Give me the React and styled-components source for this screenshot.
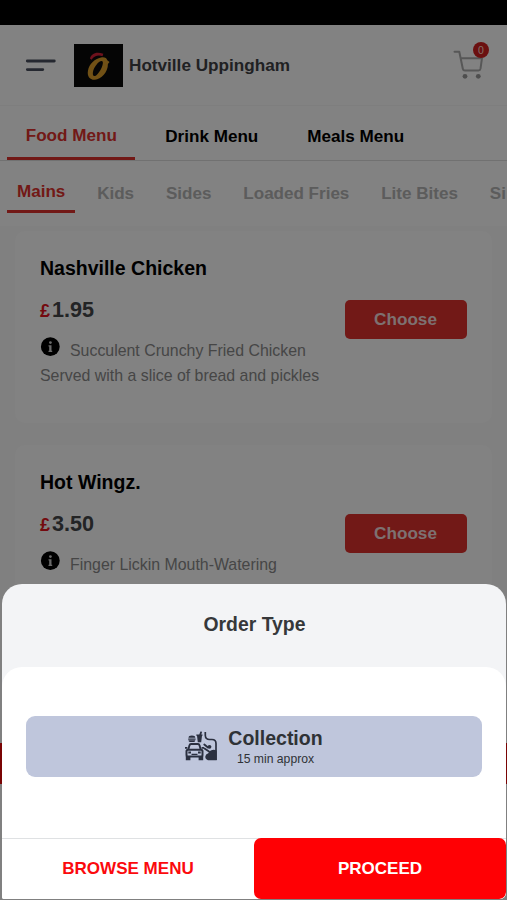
import React from 'react'
import styled, {createGlobalStyle, css} from 'styled-components'

const red = '#e0312d'
const ink = '#3f4145'

const GlobalStyle = createGlobalStyle`
  * {
    box-sizing: border-box;
  }
  body {
    margin: 0;
    background: #000;
    font-family: 'Liberation Sans', Arial, sans-serif;
  }
  button {
    font-family: inherit;
    border: 0;
    padding: 0;
  }
`
const Screen = styled.div`
  position: relative;
  width: 507px;
  height: 900px;
  overflow: hidden;
  display: flex;
  flex-direction: column;
  background: #fff;
`
const StatusBar = styled.div`
  flex: none;
  height: 25px;
  background: #000;
`
const Header = styled.header`
  flex: none;
  height: 81px;
  padding: 0 22px 0 25px;
  display: flex;
  align-items: center;
  border-bottom: 1px solid #f7f7f7;
`
const MenuIcon = styled.svg`
  width: 32px;
  height: 14px;
`
const Logo = styled.svg`
  width: 49px;
  height: 43px;
  margin: 0 6px 0 17px;
`
const Brand = styled.h1`
  margin: 0;
  flex: 1;
  font-size: 17.15px;
  line-height: 24px;
  color: ${ink};
`
const Cart = styled.div`
  position: relative;
  width: 32px;
  height: 30px;

  svg {
    display: block;
  }
`
const CartCount = styled.span`
  position: absolute;
  top: -8px;
  right: -4px;
  width: 16px;
  height: 16px;
  border-radius: 50%;
  background: #d32020;
  color: #ffd9c8;
  font-size: 10.5px;
  line-height: 17px;
  text-align: center;
`
const Tabs = styled.nav`
  flex: none;
  height: 55px;
  padding-left: 7px;
  display: flex;
  gap: 11.7px;
  border-bottom: 1px solid #dedede;
`
const Tab = styled.a`
  height: 54px;
  padding: 4px 18.7px 0;
  flex: none;
  font-size: 17.1px;
  font-weight: bold;
  line-height: 53px;
  color: #000;
  ${({$active}) => $active && css`
    padding-right: 18px;
    line-height: 52px;
    color: ${red};
    border-bottom: 3px solid ${red};
  `}
`
const Categories = styled.nav`
  flex: none;
  height: 65px;
  padding-left: 7px;
  display: flex;
  align-items: flex-start;
  gap: 11.9px;
  overflow: hidden;
`
const Category = styled(Tab)`
  height: 52px;
  padding: 6px 10px 0;
  font-size: 17.05px;
  line-height: 53px;
  white-space: nowrap;
  color: #b4b4b4;
  ${({$active}) => $active && css`
    padding-top: 5px;
    line-height: 52px;
    color: ${red};
    border-bottom: 3px solid ${red};
  `}
`
const List = styled.main`
  flex: 1;
  padding: 5px 15px 0;
  display: flex;
  flex-direction: column;
  gap: 21.7px;
  background: #fcfcfc;
`
const Card = styled.article`
  flex: none;
  height: 192px;
  padding: 25px 25.5px 0 25px;
  display: flex;
  justify-content: space-between;
  border-radius: 10px;
  background: #fff;
`
const Title = styled.h2`
  margin: 0;
  font-size: 19.5px;
  line-height: 24px;
  color: #000;
`
const Price = styled.div`
  margin-top: 18px;
  display: flex;
  align-items: baseline;
  gap: 2px;
  font-size: 21.6px;
  font-weight: bold;
  line-height: 24px;
  color: #45474a;
`
const Currency = styled.span`
  width: 10px;
  font-size: 18px;
  color: #e31420;
`
const Description = styled.p`
  margin: 14px 0 0;
  font-size: 15.9px;
  line-height: 24.7px;
  color: #8a8a8a;
  white-space: pre-line;
`
const InfoIcon = styled.svg`
  width: 20px;
  height: 20px;
  margin-right: 10px;
  vertical-align: -1px;
`
const ChooseButton = styled.button`
  flex: none;
  width: 122px;
  height: 39px;
  margin-top: 44px;
  border-radius: 5px;
  background: ${red};
  color: #f6dedd;
  font-size: 17.15px;
  font-weight: bold;
`
const BasketBar = styled.div`
  position: absolute;
  top: 743px;
  left: 0;
  right: 0;
  height: 41px;
  background: #f00808;
`
const Backdrop = styled.div`
  position: absolute;
  inset: 0;
  background: rgba(0, 0, 0, 0.49);
`
const Sheet = styled.section`
  position: absolute;
  left: 2px;
  right: 1px;
  bottom: 1px;
  height: 315.5px;
  display: flex;
  flex-direction: column;
  overflow: hidden;
  border-radius: 20px 20px 6px 2px;
  background: #f3f4f6;
`
const SheetTitle = styled.h2`
  flex: none;
  margin: 0;
  height: 83px;
  font-size: 19.4px;
  line-height: 81px;
  text-align: center;
  text-indent: 1px;
  color: #36383a;
`
const SheetBody = styled.div`
  flex: 1;
  padding: 49px 24px 0;
  border-radius: 20px 20px 0 0;
  background: #fff;
`
const OrderOption = styled.div`
  height: 61px;
  display: flex;
  align-items: center;
  justify-content: center;
  gap: 11px;
  border-radius: 9px;
  background: #bfc6dc;
  color: #2f3236;
`
const OptionText = styled.div`
  padding-top: 4px;
  text-align: center;
`
const OptionName = styled.div`
  font-size: 19.5px;
  font-weight: bold;
  line-height: 22px;
`
const OptionTime = styled.div`
  font-size: 12.2px;
  line-height: 20px;
`
const Actions = styled.footer`
  flex: none;
  height: 61.5px;
  display: flex;
  border-top: 1px solid #dfe1e3;
  background: #fff;
`
const Action = styled.button`
  flex: 1;
  margin-top: -1px;
  padding-top: 2px;
  font-size: 17.05px;
  font-weight: bold;
  border-radius: 7px;
  color: ${({$primary}) => $primary ? '#fff' : '#fb0a0d'};
  background: ${({$primary}) => $primary ? '#ff0004' : 'transparent'};
`

const menus = ['Food Menu', 'Drink Menu', 'Meals Menu']
const categories = ['Mains', 'Kids', 'Sides', 'Loaded Fries', 'Lite Bites', 'Si']
const products = [
  {
    name: 'Nashville Chicken',
    price: '1.95',
    description: 'Succulent Crunchy Fried Chicken\nServed with a slice of bread and pickles'
  },
  {
    name: 'Hot Wingz.',
    price: '3.50',
    description: 'Finger Lickin Mouth-Watering'
  }
]

const BrandLogo = () => (
  <Logo viewBox="0 0 49 43">
    <rect width="49" height="43" fill="#0b0b0b" />
    <path d="M16 14.500c1-4.500 6-7.500 13.300-4.700l-.8 2.400c-4-1.400-8-.6-11 3.500z" fill="#d82338" />
    <path
      fillRule="evenodd"
      fill="#dda02c"
      d="M27 13.500c3.500-.8 5.700.6 6.300 2.800l2.200 1.700-1.600 2c.3 8-6.900 15.500-13 15.800-5.400.2-8-3.800-6.900-9.300C15 20.500 20.500 14.800 27 13.500zM28.300 17.200c-3.300-.9-8.800 6.300-9.400 11.300-.4 3.500 1 4.400 3.200 2.900 4.300-3 8.400-13.100 6.200-14.200z"
    />
  </Logo>
)

const CartIcon = () => (
  <svg width="32" height="30" viewBox="0 0 32 30" fill="none" stroke="#ababab" strokeWidth="2" strokeLinecap="round" strokeLinejoin="round">
    <path d="M1.500 1.700H6.300L9.800 18.700q.400 1.800 2 1.800H25.500q1.700 0 2-1.800L29 8.200H7.700" />
    <circle cx="12" cy="26.300" r="2.400" fill="#999" stroke="none" />
    <circle cx="25.300" cy="26.300" r="2.400" fill="#999" stroke="none" />
  </svg>
)

const Info = () => (
  <InfoIcon viewBox="0 0 20 20">
    <circle cx="10.300" cy="9.700" r="9.400" fill="#000" />
    <path d="M8.500 8.200h3v5.500h.7v1.300H8.500v-1.300h.7V9.500h-.7z" fill="#d0d0d0" />
    <circle cx="10.400" cy="5.600" r="1.400" fill="#d0d0d0" />
  </InfoIcon>
)

// car at a drive-through window with a burger and a drink
const CollectionIcon = () => (
  <svg width="32" height="30" viewBox="0 0 32 30" fill="#2b3040">
    <path d="M3.500 6.800q0-2.300 3.400-2.300t3.400 2.300zM3.200 7.500h7.400v1.200H3.200zM3.500 9.300h6.800q0 1.800-1.400 1.800h-4q-1.400 0-1.400-1.800z" />
    <path d="M11.300 3.400h3L15.400.6l1.700.2-.8 2.600h1.200v1.300h-.5l-.8 6.500h-3.400l-.8-6.500h-.7z" />
    <path d="M20.300 1v3.500q.3 4 4.200 4h2.500q4 0 4 4V29" fill="none" stroke="#2b3040" strokeWidth="1.700" />
    <path d="M3.200 19l1.300-4.800q.3-1.200 1.500-1.200h7q1.200 0 1.500 1.200L15.800 19" fill="none" stroke="#2b3040" strokeWidth="1.900" />
    <path d="M0 16h2.400v1.800H0zM16.600 16H19v1.800h-2.400z" />
    <rect x="1.500" y="18.800" width="16" height="6.600" rx="1.500" fill="none" stroke="#2b3040" strokeWidth="2" />
    <path d="M3.300 20.600h2.700v2H3.300zM13 20.600h2.700v2H13zM6.500 22.700h6v1.300h-6zM.8 25h4.600v4.200H.8zM13.600 25h4.600v4.200h-4.600z" />
    <path d="M19.300 13.500l3.700 3M19.500 17.500l4.500 3" fill="none" stroke="#2b3040" strokeWidth="1.900" strokeLinecap="round" />
    <circle cx="24.500" cy="15.800" r="1.900" />
    <path d="M20.300 25.500q.2-2.300 3-3.300l1.200-2q3.200-2.700 7.200-.7v9.700H23q-2.900-1.200-2.700-3.700z" />
  </svg>
)

const Product = ({name, price, description}) => (
  <Card>
    <div>
      <Title>{name}</Title>
      <Price>
        <Currency>£</Currency>
        <span>{price}</span>
      </Price>
      <Description>
        <Info />
        {description}
      </Description>
    </div>
    <ChooseButton>Choose</ChooseButton>
  </Card>
)

const OrderTypeSheet = () => (
  <Sheet>
    <SheetTitle>Order Type</SheetTitle>
    <SheetBody>
      <OrderOption>
        <CollectionIcon />
        <OptionText>
          <OptionName>Collection</OptionName>
          <OptionTime>15 min approx</OptionTime>
        </OptionText>
      </OrderOption>
    </SheetBody>
    <Actions>
      <Action>BROWSE MENU</Action>
      <Action $primary>PROCEED</Action>
    </Actions>
  </Sheet>
)

const App = () => (
  <>
    <GlobalStyle />
    <Screen>
      <StatusBar />
      <Header>
        <MenuIcon viewBox="0 0 32 14" stroke="#4a505e" strokeWidth="2.800" strokeLinecap="round">
          <path d="M2.300 3h27M2.300 11.600h15.500" />
        </MenuIcon>
        <BrandLogo />
        <Brand>Hotville Uppingham</Brand>
        <Cart>
          <CartIcon />
          <CartCount>0</CartCount>
        </Cart>
      </Header>
      <Tabs>
        {menus.map((label, i) => <Tab key={label} $active={i === 0}>{label}</Tab>)}
      </Tabs>
      <Categories>
        {categories.map((label, i) => <Category key={i} $active={i === 0}>{label}</Category>)}
      </Categories>
      <List>
        {products.map(product => <Product key={product.name} {...product} />)}
      </List>
      <BasketBar />
      <Backdrop />
      <OrderTypeSheet />
    </Screen>
  </>
)

export default App
